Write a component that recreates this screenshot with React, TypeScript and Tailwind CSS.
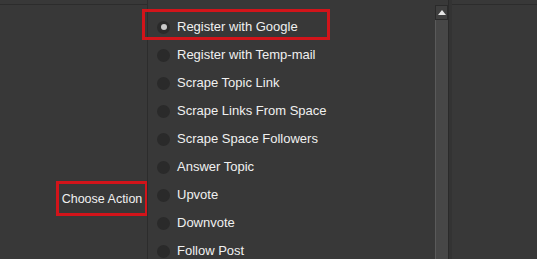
import React from 'react'

const actions = [
  'Register with Google',
  'Register with Temp-mail',
  'Scrape Topic Link',
  'Scrape Links From Space',
  'Scrape Space Followers',
  'Answer Topic',
  'Upvote',
  'Downvote',
  'Follow Post',
]

const App: React.FC = () => {
  const selected = 0

  return (
    <div
      className="relative flex h-[259px] w-[537px] overflow-hidden bg-[#383838] text-[#f0f0f0]"
      style={{ fontFamily: '"Liberation Sans", Arial, sans-serif' }}
    >
      {/* left label column */}
      <div className="flex w-[147px] shrink-0 flex-col">
        <div className="mt-[4px] h-px shrink-0 bg-[#2c2c2c]" />
        <div className="shrink-0 pl-[56px] pt-[176px]">
          <div className="flex h-[35px] w-[92px] items-center justify-center border-[3px] border-[#d2141a] pt-px text-[12.5px]">
            Choose Action
          </div>
        </div>
      </div>
      <div className="w-px shrink-0 bg-[#2c2c2c]" />

      {/* radio list */}
      <div className="flex w-[287px] shrink-0 flex-col pt-[13px]">
        {actions.map((a, i) => (
          <div key={a} className="flex h-[28px] shrink-0 items-center pl-[9px]">
            <span className="flex h-[13px] w-[13px] items-center justify-center rounded-full bg-[#2a2a2a]">
              {i === selected && <span className="h-[6px] w-[6px] rounded-full bg-[#c9c9c9]" />}
            </span>
            <span className="ml-[7px] whitespace-nowrap text-[13px]">{a}</span>
          </div>
        ))}
      </div>

      {/* scrollbar */}
      <div className="flex w-[13px] shrink-0 flex-col pt-[5px]">
        <div className="flex h-[15px] shrink-0 items-center justify-center border border-[#2a2a2a] bg-[#3f3f3f]">
          <svg width="8" height="5" viewBox="0 0 8 5">
            <path d="M0 5 L4 0 L8 5 Z" fill="#e6e6e6" />
          </svg>
        </div>
        <div className="flex-1 border-l border-[#5a5a5a] bg-[#474747]" />
      </div>
      <div className="w-[4px] shrink-0 border-l border-[#2a2a2a] bg-[#333333]" />

      {/* right area */}
      <div className="flex flex-1 flex-col">
        <div className="mt-[4px] h-px shrink-0 bg-[#2c2c2c]" />
      </div>

      {/* highlight over first option */}
      <div className="pointer-events-none absolute left-[142px] top-[9px] h-[31px] w-[188px] border-[3px] border-[#d2141a]" />
    </div>
  )
}

export default App
